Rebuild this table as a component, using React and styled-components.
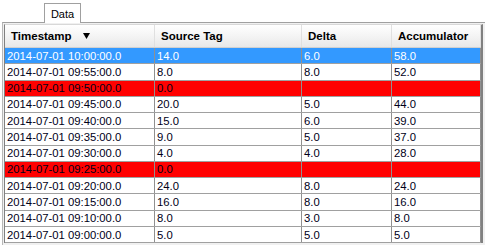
import React from "react";
import styled, { createGlobalStyle } from "styled-components";

const rows = [
  { ts: "2014-07-01 10:00:00.0", src: "14.0", delta: "6.0", acc: "58.0", state: "selected" },
  { ts: "2014-07-01 09:55:00.0", src: "8.0", delta: "8.0", acc: "52.0" },
  { ts: "2014-07-01 09:50:00.0", src: "0.0", delta: "", acc: "", state: "error" },
  { ts: "2014-07-01 09:45:00.0", src: "20.0", delta: "5.0", acc: "44.0" },
  { ts: "2014-07-01 09:40:00.0", src: "15.0", delta: "6.0", acc: "39.0" },
  { ts: "2014-07-01 09:35:00.0", src: "9.0", delta: "5.0", acc: "37.0" },
  { ts: "2014-07-01 09:30:00.0", src: "4.0", delta: "4.0", acc: "28.0" },
  { ts: "2014-07-01 09:25:00.0", src: "0.0", delta: "", acc: "", state: "error" },
  { ts: "2014-07-01 09:20:00.0", src: "24.0", delta: "8.0", acc: "24.0" },
  { ts: "2014-07-01 09:15:00.0", src: "16.0", delta: "8.0", acc: "16.0" },
  { ts: "2014-07-01 09:10:00.0", src: "8.0", delta: "3.0", acc: "8.0" },
  { ts: "2014-07-01 09:00:00.0", src: "5.0", delta: "5.0", acc: "5.0" },
];

const App = () => {
  return (
    <>
      <GlobalStyle />
      <Page>
        <TabBar>
          <Tab>Data</Tab>
        </TabBar>
        <Panel>
          <Table>
            <HeaderRow>
              <HeadCell>
                Timestamp
                <SortArrow width="7" height="6" viewBox="0 0 7 6">
                  <path d="M0 0 H7 L3.5 6 Z" fill="#000" />
                </SortArrow>
              </HeadCell>
              <HeadCell>Source Tag</HeadCell>
              <HeadCell>Delta</HeadCell>
              <HeadCell>Accumulator</HeadCell>
            </HeaderRow>
            {rows.map((r) => (
              <Row key={r.ts} $state={r.state}>
                <Cell>{r.ts}</Cell>
                <Cell>{r.src}</Cell>
                <Cell>{r.delta}</Cell>
                <Cell>{r.acc}</Cell>
              </Row>
            ))}
          </Table>
        </Panel>
      </Page>
    </>
  );
};

const GlobalStyle = createGlobalStyle`
  body {
    margin: 0;
    background: #ffffff;
    font-family: "Liberation Sans", Arial, sans-serif;
  }
`;

const Page = styled.div`
  width: 485px;
  height: 245px;
  display: flex;
  flex-direction: column;
  overflow: hidden;
`;

const TabBar = styled.div`
  display: flex;
  height: 22px;
  padding-left: 44px;
  align-items: flex-end;
`;

const Tab = styled.div`
  width: 35px;
  height: 19px;
  border: 1px solid #a0a0a0;
  border-bottom: none;
  background: #ffffff;
  font-size: 11px;
  color: #000;
  display: flex;
  align-items: center;
  justify-content: center;
  margin-bottom: -1px;
  position: relative;
`;

const Panel = styled.div`
  flex: 1;
  border-top: 1px solid #a0a0a0;
  border-left: 1px solid #b8b8b8;
  margin-left: 2px;
  background: #f0f0f0;
  padding: 1px 2px 0 1px;
`;

const cols = "150px 147px 90px 1fr";

const Table = styled.div`
  background: #ffffff;
  border-left: 1px solid #808080;
  border-right: 2px solid #808080;
  border-top: 1px solid #d8d8d8;
`;

const HeaderRow = styled.div`
  display: grid;
  grid-template-columns: ${cols};
  height: 22px;
  background: linear-gradient(#ffffff, #f2f2f2 60%, #e8e8e8);
  border-bottom: 1px solid #d0d0d0;
`;

const HeadCell = styled.div`
  display: flex;
  align-items: center;
  padding-left: 6px;
  font-size: 11.5px;
  font-weight: bold;
  color: #000;
  border-right: 1px solid #e0e0e0;
`;

const SortArrow = styled.svg`
  margin-left: 11px;
`;

const rowBg = {
  selected: "#3399ff",
  error: "#ff0000",
};

const Row = styled.div`
  display: grid;
  grid-template-columns: ${cols};
  height: 16.27px;
  box-sizing: border-box;
  border-bottom: 1px solid #a0a0a0;
  background: ${(p) => rowBg[p.$state] || "#ffffff"};
  color: ${(p) => (p.$state === "selected" ? "#ffffff" : "#000018")};
`;

const Cell = styled.div`
  display: flex;
  align-items: center;
  padding-left: 2px;
  font-size: 11.3px;
  border-right: 1px solid #909090;
  white-space: nowrap;
  overflow: hidden;
`;

export default App;
